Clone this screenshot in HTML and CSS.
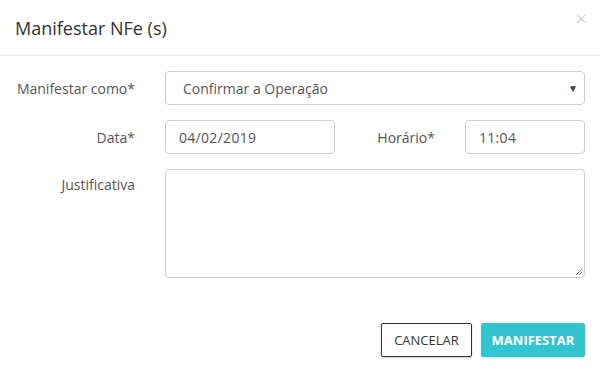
FILE: index.html
```html
<!DOCTYPE html>
<html lang="pt">
<head>
<meta charset="utf-8">
<link rel="stylesheet" href="styles.css">
</head>
<body>
<div class="modal">
  <div class="modal-header">
    <h4 class="title">Manifestar NFe (s)</h4>
    <span class="close">×</span>
  </div>
  <div class="modal-body">
    <div class="row">
      <label class="lbl">Manifestar como*</label>
      <div class="select">
        <span>Confirmar a Operação</span>
        <span class="caret">▼</span>
      </div>
    </div>
    <div class="row row-date">
      <label class="lbl">Data*</label>
      <div class="input date">04/02/2019</div>
      <label class="lbl">Horário*</label>
      <div class="input time">11:04</div>
    </div>
    <div class="row">
      <label class="lbl lbl-top">Justificativa</label>
      <div class="textarea">
        <svg class="grip" width="9" height="9" viewBox="0 0 9 9"><path d="M8 2 L2 8 M8 5 L5 8" stroke="#777" stroke-width="1"/></svg>
      </div>
    </div>
  </div>
  <div class="modal-footer">
    <button class="btn btn-cancel">CANCELAR</button>
    <button class="btn btn-primary">MANIFESTAR</button>
  </div>
</div>
</body>
</html>
```
FILE: styles.css
```css
* { box-sizing: border-box; }
html, body { margin: 0; padding: 0; background: #fff; }
body { font-family: "Open Sans", "Liberation Sans", sans-serif; color: #555; }
.modal { width: 600px; height: 372px; display: flex; flex-direction: column; }
.modal-header {
  height: 56px;
  border-bottom: 1px solid #e8e8e8;
  display: flex;
  align-items: center;
  justify-content: space-between;
  padding: 0 15px;
}
.title { margin: 0; font-size: 18px; font-weight: 400; color: #333; }
.close { font-size: 20px; color: #c4c4c4; line-height: 1; margin-top: -18px; margin-right: -2px; font-weight: 300; }
.modal-body { padding: 15px 15px 0 15px; display: flex; flex-direction: column; gap: 15px; }
.row { display: grid; grid-template-columns: 120px 420px; column-gap: 30px; align-items: center; }
.row-date { grid-template-columns: 120px 170px 70px 120px; }
.lbl { font-size: 14px; text-align: right; color: #555; }
.lbl-top { align-self: start; padding-top: 6px; }
.select, .input, .textarea {
  border: 1px solid #c9ced8;
  border-radius: 4px;
  height: 34px;
  font-size: 14px;
  color: #555;
}
.select { display: flex; align-items: center; justify-content: space-between; padding: 0 6px 0 17px; }
.caret { font-size: 10px; color: #444; }
.input { display: flex; align-items: center; padding: 0 13px; letter-spacing: 0.3px; }
.textarea { height: 109px; position: relative; }
.grip { position: absolute; right: 1px; bottom: 1px; }
.modal-footer { margin-top: auto; display: flex; justify-content: flex-end; gap: 9px; padding: 0 15px 15px 0; }
.btn {
  font-family: "Open Sans", "Liberation Sans", sans-serif;
  font-size: 13px;
  height: 34px;
  border-radius: 2px;
  cursor: pointer;
}
.btn-cancel { width: 91px; background: #fff; border: 1px solid #333; color: #333; box-shadow: 0 1px 2px rgba(0,0,0,0.2); }
.btn-primary { width: 104px; background: #33c4d2; border: 1px solid #33c4d2; color: #fff; font-weight: 700; box-shadow: 0 1px 2px rgba(0,0,0,0.15); }
```
